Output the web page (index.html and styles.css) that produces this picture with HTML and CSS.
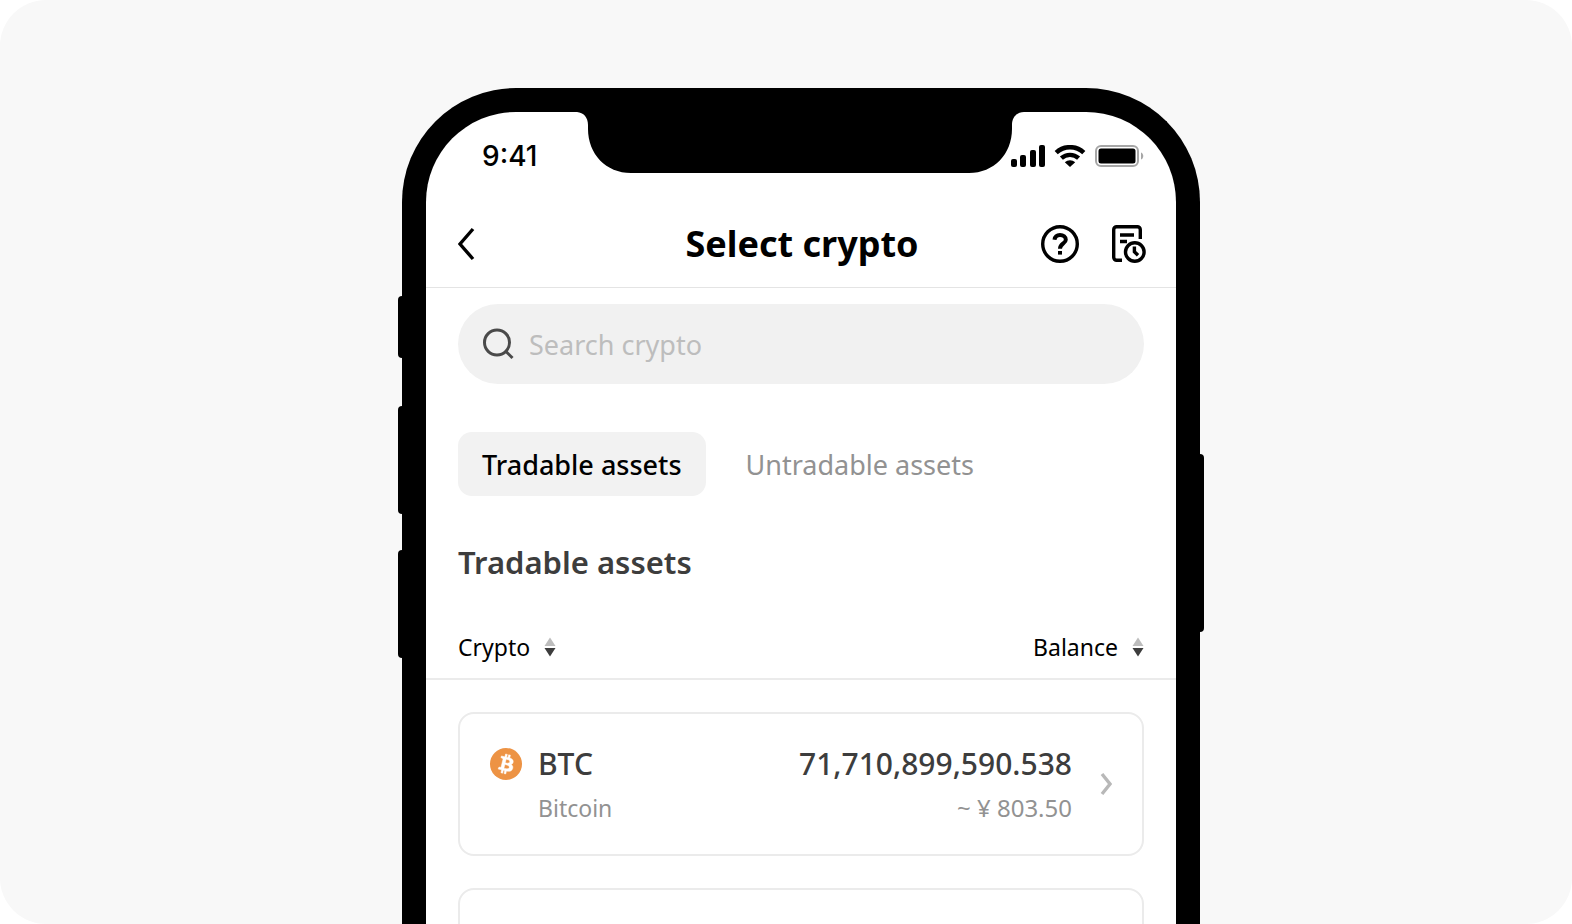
FILE: index.html
```html
<!DOCTYPE html>
<html lang="en">
<head>
    <meta charset="UTF-8">
    <meta name="viewport" content="width=device-width, initial-scale=1.0">
    <title>Select crypto</title>
    <link rel="stylesheet" href="styles.css">
</head>
<body>

    <div class="stage">
        <div class="phone">
            <!-- side buttons -->
            <span class="side-key mute"></span>
            <span class="side-key volume-up"></span>
            <span class="side-key volume-down"></span>
            <span class="side-key power"></span>

            <!-- notch -->
            <svg class="notch" width="448" height="62" viewBox="1 0 448 62" aria-hidden="true">
                <path d="M0 0V1C7 1 12 6 12 14V18C12 43 30 62 55 62H393C418 62 436 43 436 18V14C436 6 441 1 448 1V0Z"/>
            </svg>

            <div class="screen">
                <div class="status-bar">
                    <span class="time">9:41</span>
                    <div class="status-icons">
                        <svg width="34" height="22" viewBox="0 0 34 22" aria-hidden="true">
                            <rect x="0" y="14" width="6" height="8" rx="2"/>
                            <rect x="9" y="10" width="6" height="12" rx="2"/>
                            <rect x="19" y="5" width="6" height="17" rx="2"/>
                            <rect x="28" y="0" width="6" height="22" rx="2"/>
                        </svg>
                        <svg width="32" height="22" viewBox="0 0 32 22" aria-hidden="true">
                            <path d="M2.200 7.600C10 .4 22 .4 29.800 7.600" fill="none" stroke="#000" stroke-width="4.600"/>
                            <path d="M7.400 13.200C12.300 8.700 19.700 8.700 24.600 13.200" fill="none" stroke="#000" stroke-width="4.400"/>
                            <path d="M10.800 17.200C13.800 14.500 18.200 14.500 21.200 17.200L16 22Z"/>
                        </svg>
                        <svg width="49" height="22" viewBox="0 0 49 22" aria-hidden="true">
                            <rect x="1" y="1" width="42" height="20" rx="5" fill="none" stroke="#a6a6a6" stroke-width="2"/>
                            <rect x="3.500" y="3.500" width="37" height="15" rx="2.500"/>
                            <path d="M46 7.500C49 8.500 49 13.500 46 14.500Z" fill="#a6a6a6"/>
                        </svg>
                    </div>
                </div>

                <header class="header">
                    <button class="icon-btn" type="button" aria-label="Back">
                        <svg width="18" height="34" viewBox="0 0 18 34">
                            <path d="M15 2L2 17L15 32" fill="none" stroke="#000" stroke-width="3.400"/>
                        </svg>
                    </button>
                    <h1>Select crypto</h1>
                    <div class="header-actions">
                        <button class="icon-btn" type="button" aria-label="Help">
                            <svg width="38" height="38" viewBox="0 0 38 38" fill="none" stroke="#000">
                                <circle cx="19" cy="19" r="17.300" stroke-width="3.400"/>
                                <path d="M13.500 14.800C14 11.200 16.200 10 19 10C22.400 10 24.800 11.900 24.800 14.700C24.800 18.500 19 18.400 19 23.800" stroke-width="4"/>
                                <path d="M17 26h4v3.600h-4z" fill="#000" stroke="none"/>
                            </svg>
                        </button>
                        <button class="icon-btn" type="button" aria-label="History">
                            <svg width="34" height="38" viewBox="0 0 34 38" fill="none" stroke="#000" stroke-width="3.400">
                                <path d="M10 35.300H4.700C3 35.300 1.700 34 1.700 32.300V4.700C1.700 3 3 1.700 4.700 1.700H25.300C27 1.700 28.300 3 28.300 4.700V14"/>
                                <path d="M8 10H22M8 16.500H15"/>
                                <circle cx="22.800" cy="27" r="9.300"/>
                                <path d="M22.400 21.500V26.800L26 30.300"/>
                            </svg>
                        </button>
                    </div>
                </header>

                <main class="content">
                    <label class="search">
                        <svg width="32" height="32" viewBox="0 0 32 32" fill="none" stroke="#4a4a4a" stroke-width="3" aria-hidden="true">
                            <circle cx="15" cy="14.500" r="12.500"/>
                            <path d="M23.500 23L30.500 30"/>
                        </svg>
                        <input type="text" placeholder="Search crypto" aria-label="Search crypto">
                    </label>

                    <div class="tabs">
                        <button class="tab active" type="button">Tradable assets</button>
                        <button class="tab" type="button">Untradable assets</button>
                    </div>

                    <h2>Tradable assets</h2>
                </main>

                <div class="columns">
                    <button class="sort" type="button">Crypto
                        <svg width="12" height="20" viewBox="0 0 12 20" aria-hidden="true">
                            <path d="M6 0.500L11.500 9H.5Z" fill="#bdbdbd"/>
                            <path d="M6 19.500L.5 11H11.500Z" fill="#3d3d3d"/>
                        </svg>
                    </button>
                    <button class="sort" type="button">Balance
                        <svg width="12" height="20" viewBox="0 0 12 20" aria-hidden="true">
                            <path d="M6 0.500L11.500 9H.5Z" fill="#bdbdbd"/>
                            <path d="M6 19.500L.5 11H11.500Z" fill="#3d3d3d"/>
                        </svg>
                    </button>
                </div>

                <div class="assets">
                    <a class="asset" href="#btc">
                        <svg class="coin" width="32" height="32" viewBox="0 0 32 32" aria-hidden="true">
                            <circle cx="16" cy="16" r="16" fill="#ed9344"/>
                            <path d="M23.189 14.020c.314-2.096-1.283-3.223-3.465-3.975l.708-2.840-1.728-.430-.690 2.765c-.454-.114-.920-.220-1.385-.326l.695-2.783L15.596 6l-.708 2.839c-.376-.086-.746-.170-1.104-.260l.002-.009-2.384-.595-.460 1.846s1.283.294 1.256.312c.700.175.826.638.805 1.006l-.806 3.235c.048.012.110.030.180.057l-.183-.045-1.130 4.532c-.086.212-.303.531-.793.410.018.025-1.256-.313-1.256-.313l-.858 1.978 2.250.561c.418.105.828.215 1.231.318l-.715 2.872 1.727.430.708-2.840c.472.127.930.245 1.378.357l-.706 2.828 1.728.430.715-2.866c2.948.558 5.164.333 6.097-2.333.752-2.146-.037-3.385-1.588-4.192 1.130-.260 1.980-1.003 2.207-2.538zm-3.950 5.538c-.533 2.147-4.148.986-5.320.695l.950-3.805c1.172.293 4.929.872 4.370 3.110zm.535-5.569c-.487 1.953-3.495.960-4.470.717l.860-3.450c.975.243 4.118.696 3.610 2.733z" fill="#fff" stroke="#fff" stroke-width="0.500"/>
                        </svg>
                        <div class="asset-name">
                            <span class="main-line">BTC</span>
                            <span class="sub-line">Bitcoin</span>
                        </div>
                        <div class="asset-balance">
                            <span class="main-line">71,710,899,590.538</span>
                            <span class="sub-line">~ ¥ 803.50</span>
                        </div>
                        <svg class="arrow" width="12" height="24" viewBox="0 0 12 24" fill="none" stroke="#b8b8b8" stroke-width="3.400" aria-hidden="true">
                            <path d="M2 2L10 12L2 22"/>
                        </svg>
                    </a>
                    <div class="asset"></div>
                </div>
            </div>
        </div>
    </div>

</body>
</html>
```

FILE: styles.css
```css
* {
    box-sizing: border-box;
}

body {
    margin: 0;
    background-color: #fff;
    font-family: "Noto Sans", "Open Sans", sans-serif;
    color: #000;
}

button {
    padding: 0;
    border: none;
    background: none;
    font-family: inherit;
    color: inherit;
    cursor: pointer;
}

svg {
    display: block;
    flex-shrink: 0;
}

h1,
h2 {
    margin: 0;
    font-weight: 600;
}

.stage {
    height: 100vh;
    padding: 88px 0 0 30px;
    background-color: #f8f8f8;
    border-radius: 46px;
    overflow: hidden;
}

/* phone body */
.phone {
    position: relative;
    max-width: 798px;
    margin: 0 auto;
    border: 24px solid #000;
    border-bottom: none;
    border-radius: 114px 114px 0 0;
    background-color: #fff;
}

.side-key {
    position: absolute;
    left: -28px;
    width: 8px;
    height: 108px;
    background-color: #000;
    border-radius: 4px;
}

.mute {
    top: 184px;
    height: 62px;
}

.volume-up {
    top: 294px;
}

.volume-down {
    top: 438px;
}

.power {
    top: 342px;
    left: auto;
    right: -28px;
    height: 178px;
}

.notch {
    position: absolute;
    top: -1px;
    left: 50%;
    transform: translateX(-50%);
}

/* status bar */
.status-bar {
    display: flex;
    align-items: center;
    justify-content: space-between;
    height: 88px;
    padding: 0 32px 0 56px;
}

.time {
    font-family: Inter, sans-serif;
    font-size: 28px;
    font-weight: 500;
}

.status-icons {
    display: flex;
    gap: 9px;
}

/* title bar */
.header {
    display: grid;
    grid-template-columns: 1fr auto 1fr;
    align-items: center;
    height: 88px;
    padding: 0 30px 0 32px;
    border-bottom: 1px solid #e4e4e4;
}

.header h1 {
    font-size: 36px;
    line-height: 48px;
    font-weight: 700;
}

.icon-btn {
    justify-self: start;
}

.header-actions {
    display: flex;
    justify-content: flex-end;
    gap: 33px;
}

.content {
    padding: 16px 32px 0;
}

.search {
    display: flex;
    align-items: center;
    gap: 15px;
    height: 80px;
    padding: 0 24px;
    background-color: #f1f1f1;
    border-radius: 40px;
}

.search input {
    flex: 1;
    min-width: 0;
    padding: 0;
    border: none;
    outline: none;
    background: none;
    font-family: inherit;
    font-size: 27px;
}

.search input::placeholder {
    color: #bdbdbd;
}

.tabs {
    display: flex;
    gap: 16px;
    margin-top: 48px;
}

.tab {
    height: 64px;
    padding: 0 24px;
    border-radius: 14px;
    font-size: 27px;
    color: #929292;
}

.tab.active {
    background-color: #f2f2f2;
    font-weight: 500;
    color: #000;
}

.content h2 {
    margin-top: 42px;
    font-size: 31px;
    line-height: 48px;
    color: #3d3d3d;
}

.columns {
    display: flex;
    justify-content: space-between;
    padding: 45px 32px 15px;
    border-bottom: 2px solid #ebebeb;
}

.sort {
    display: flex;
    align-items: center;
    gap: 14px;
    font-size: 23px;
    line-height: 32px;
}

/* asset cards */
.assets {
    display: flex;
    flex-direction: column;
    gap: 32px;
    padding: 32px;
}

.asset {
    display: flex;
    min-height: 144px;
    padding: 30px;
    border: 2px solid #ebebeb;
    border-radius: 16px;
    text-decoration: none;
}

.coin {
    margin: 4px 16px 0 0;
}

.asset-name,
.asset-balance {
    display: flex;
    flex-direction: column;
    gap: 8px;
}

.asset-balance {
    margin-left: auto;
    align-items: flex-end;
}

.main-line {
    font-size: 30px;
    line-height: 40px;
    font-weight: 500;
    color: #3d3d3d;
}

.sub-line {
    font-size: 23px;
    line-height: 32px;
    color: #929292;
}

.asset-balance .sub-line {
    font-size: 24px;
}

.arrow {
    align-self: center;
    margin-left: 28px;
}
```
